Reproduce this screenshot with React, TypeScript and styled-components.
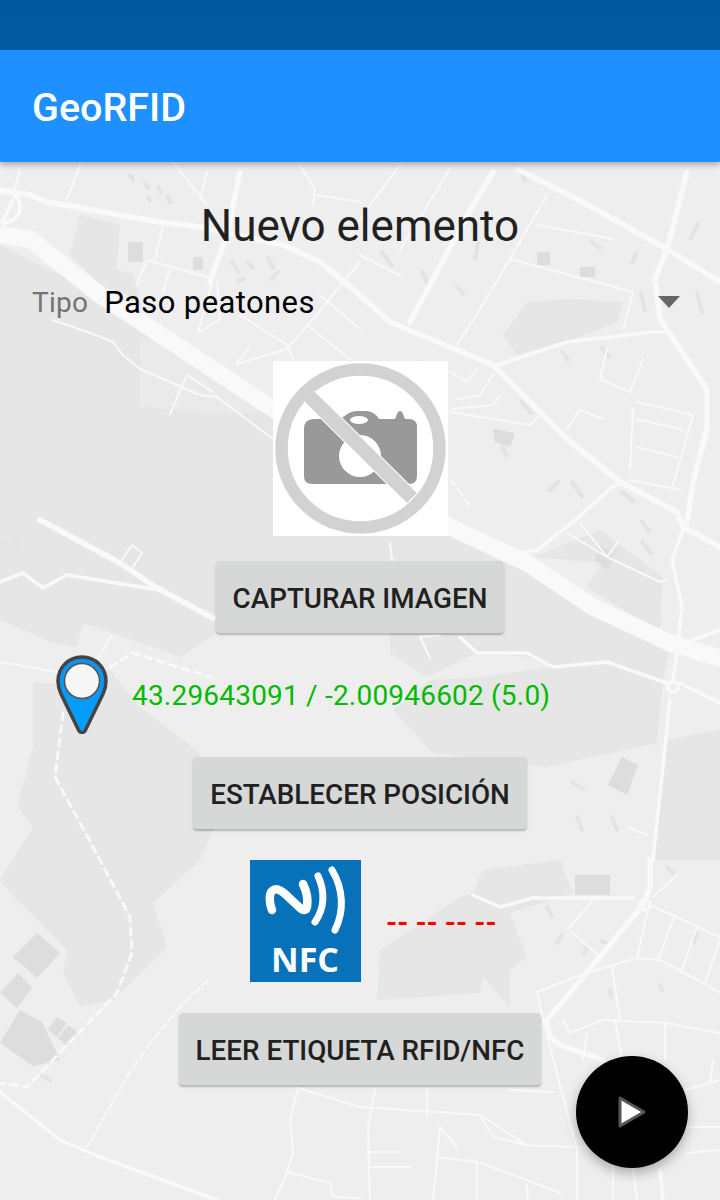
import styled, { createGlobalStyle } from "styled-components";

const GlobalStyle = createGlobalStyle`
  html, body {
    margin: 0;
    padding: 0;
    background: #eeeeee;
    font-family: Roboto, "Liberation Sans", sans-serif;
  }
`;

// map traced from the reference, in page pixels
const darkAreas = [
  "0,245 100,295 167,339 273,409 450,527 530,560 600,610 670,643 663,683 607,662 553,667 527,657 477,653 427,677 390,653 390,633 217,633 180,657 113,633 83,623 77,647 53,643 0,620",
  "33,683 57,683 110,670 140,707 200,753 213,830 200,860 153,903 167,947 113,1000 80,1007 63,973 67,950 20,903 0,880 33,827 17,807 33,747",
  "380,950 460,897 473,893 483,870 560,860 573,893 510,913 527,957 510,970 510,1007 483,977 480,993 377,1000",
  "393,710 430,680 480,677 553,667 610,660 663,683 657,743 547,767 433,753",
  "667,740 720,730 720,860 653,860",
  "533,557 603,563 587,587 660,633 663,577 600,530",
  "503,335 527,302 573,299 623,302 617,322 567,342 517,355",
  "70,255 80,215 120,225 117,269 133,275 140,300 100,285",
];

const paleAreas = ["140,339 233,414 140,407", "140,339 167,339 273,409 233,414"];

const buildings = [
  "622,757 638,765 627,795 608,785",
  "575,875 610,875 610,895 575,895",
  "37,933 60,953 37,978 13,957",
  "18,973 32,988 17,1008 0,993",
  "20,1010 42,1022 60,1060 33,1066 0,1043",
  "57,1017 67,1023 57,1037 48,1030",
  "68,1025 77,1032 65,1045 58,1038",
  "580,267 595,267 595,277 580,277",
  "537,252 550,252 550,265 537,265",
  "493,429 515,433 510,447 495,442",
  "128,242 143,242 143,262 128,262",
  "193,257 203,257 203,270 193,270",
  "600,545 615,555 608,570 595,560",
];

const smallBlocks = [
  "130,175 133,180", "145,183 148,188", "158,187 161,192", "168,197 170,202", "148,197 150,200",
  "232,262 238,272", "247,262 253,268", "268,258 273,268", "238,281 244,279", "272,279 278,272",
  "632,262 636,254", "592,242 600,248", "602,348 609,357", "562,352 568,360", "478,244 475,258",
  "382,252 392,266", "422,272 428,284", "457,287 463,294", "522,402 531,413", "502,447 507,456",
  "572,482 582,496", "622,492 633,501", "642,542 651,553", "618,548 613,555", "558,482 550,490",
  "698,224 691,238", "697,294 702,312", "641,294 645,310", "521,172 525,180", "417,362 426,369",
  "572,782 583,789", "577,817 582,830", "612,817 617,830", "667,867 673,873",
  "547,907 552,916", "557,943 562,935", "588,947 583,954", "602,941 608,945",
  "697,933 694,942", "660,985 662,990", "610,990 611,996", "0,540 8,543", "12,534 18,548",
  "642,522 649,531", "42,1076 50,1080",
];

const majorRoads = [
  "0,235 30,239 100,295 167,339 273,409 450,527 527,563 593,607 670,643 720,658",
];

const mainRoads = [
  "0,190 30,195 47,202 160,222 200,227 283,245 320,262 353,289 390,322 493,365 567,439 620,482 677,512 683,527 720,547",
  "517,169 577,199 667,249 720,282",
  "687,172 667,249 655,279 660,319 680,349 707,389 707,429 693,482 687,522",
  "240,172 227,235 210,282",
  "493,172 473,205 410,322",
  "650,860 650,887 643,905 547,1020 550,1037 560,1045 603,1060",
  "40,520 120,563 157,588 213,618",
];

const roads = [
  "497,365 567,342 653,332 670,332",
  "683,530 672,560 682,607 678,643 673,680",
  "670,700 653,860",
  "680,683 720,703",
  "687,642 720,630",
  "460,637 477,653 527,653 553,667 607,662 667,683",
  "0,1092 60,1140 100,1157 217,1200",
  "473,895 500,907 533,898 633,898",
  "660,1170 663,1200",
  "517,553 537,550 573,522 610,489 623,482",
  "0,582 23,573 43,588 67,575 147,588 160,590",
  "13,199 3,222 7,232 20,235",
];

const minorRoads = [
  "80,165 67,199", "20,169 15,189", "173,162 207,205", "207,172 200,199", "163,225 155,259",
  "147,260 213,279", "147,260 137,285", "170,269 163,292", "213,279 203,315 198,332",
  "217,282 220,319 200,332", "300,165 315,189 313,205", "317,195 360,202", "240,315 287,345 293,359",
  "287,349 313,319 360,262", "237,364 287,349", "248,349 237,364", "320,295 360,329", "307,325 350,359",
  "53,320 93,334 113,342 123,355 140,369 200,395 217,397 273,439", "187,375 170,414", "187,375 213,392",
  "547,195 510,259 480,309 457,345", "510,259 633,292 623,329", "537,225 613,239",
  "360,255 400,275", "637,402 693,415", "637,419 683,430", "637,447 677,457", "630,480 680,490",
  "693,415 673,485", "633,409 630,469", "600,379 630,392 643,359", "600,379 607,349",
  "580,410 603,419", "580,410 567,429", "453,409 493,405 500,395", "450,412 530,425 540,415",
  "477,369 467,382 450,372", "493,375 480,395 457,399", "400,165 370,205 350,235", "450,169 400,250",
  "567,533 607,557 660,582 667,580", "580,523 607,557 618,542", "420,637 430,658", "420,637 440,635",
  "390,543 392,560", "627,827 647,835", "122,560 132,545 142,553 133,567", "0,662 57,672",
  "97,660 112,635", "298,1088 360,1107", "298,1088 290,1120 293,1153 287,1172 275,1200",
  "287,1172 330,1183 333,1197 360,1198", "650,905 720,937", "653,897 677,875", "675,915 658,960",
  "697,927 682,970", "720,940 705,983", "647,913 637,958", "587,973 637,958 660,960 703,983 720,993",
  "587,973 537,992 543,1020 577,1150 577,1200", "612,967 620,1020", "615,1020 622,1060",
  "563,1020 570,1033 603,1020 665,1023 720,1033", "665,1023 665,1060", "587,1033 583,1060",
  "570,930 600,957", "593,900 570,927", "360,1107 480,1115 527,1145 573,1147", "480,1115 493,1137 527,1145",
  "427,1090 427,1117", "375,1090 368,1127 370,1200", "440,1127 433,1200", "440,1127 457,1147",
  "437,1157 477,1162 477,1200", "480,1163 527,1180 560,1193", "370,1152 398,1152", "370,1167 410,1167",
  "510,1090 553,1092", "685,1090 720,1080", "713,1060 710,1083", "687,1127 720,1127",
  "633,1167 637,1200", "613,1167 613,1200", "687,1153 720,1150", "527,1185 528,1200", "577,1147 600,1150",
];

const dashedRoads = [
  "110,667 133,653 210,677",
  "63,713 55,777 100,860 130,917 132,953 117,993 27,1087 0,1083",
];

const faintDashedRoads = ["208,980 180,1007 147,1047 127,1077 87,1147", "450,479 470,505"];

function MapBackdrop() {
  return (
    <MapSvg viewBox="0 0 720 1200" aria-hidden="true">
      <rect width="720" height="1200" fill="#eeeeee" />
      {darkAreas.map((points) => (
        <polygon key={points} points={points} fill="#e6e6e6" />
      ))}
      {paleAreas.map((points) => (
        <polygon key={points} points={points} fill="#eaeaea" />
      ))}
      {buildings.map((points) => (
        <polygon key={points} points={points} fill="#dddddd" />
      ))}
      <g fill="none" strokeLinejoin="round" strokeLinecap="round">
        <g stroke="#e3e3e3" strokeWidth="4">
          {smallBlocks.map((points) => (
            <polyline key={points} points={points} />
          ))}
        </g>
        <g stroke="#f9f9f9">
          {minorRoads.map((points) => (
            <polyline key={points} points={points} strokeWidth="2" />
          ))}
          {roads.map((points) => (
            <polyline key={points} points={points} strokeWidth="3.5" />
          ))}
          {mainRoads.map((points) => (
            <polyline key={points} points={points} strokeWidth="5.5" />
          ))}
          {majorRoads.map((points) => (
            <polyline key={points} points={points} strokeWidth="17" />
          ))}
          {dashedRoads.map((points) => (
            <polyline key={points} points={points} strokeWidth="3" strokeDasharray="7 6" />
          ))}
          {faintDashedRoads.map((points) => (
            <polyline key={points} points={points} strokeWidth="2" strokeDasharray="8 4" />
          ))}
          <circle cx="645" cy="905" r="5" strokeWidth="3.5" />
          <circle cx="673" cy="687" r="5" strokeWidth="3.5" />
          <circle cx="5" cy="207" r="15" strokeWidth="4" />
        </g>
      </g>
    </MapSvg>
  );
}

function NoCameraIcon() {
  return (
    <PhotoBox>
      <svg width="175" height="175" viewBox="0 0 175 175">
        <path
          d="M31 68q0-10 10-10h26l6-4q5-4 12-4h8q8 0 13 8h16l2-5q1-3 3-3t3 3l2 5h4q8 0 8 8v49q0 8-8 8H39q-8 0-8-8z"
          fill="#999999"
        />
        <ellipse cx="86" cy="59" rx="9" ry="4" fill="#ffffff" />
        <circle cx="87" cy="95" r="21" fill="#ffffff" />
        <circle cx="87.5" cy="87.5" r="79" fill="none" stroke="#d2d2d2" strokeWidth="12.5" />
        <path d="M36 35 139 137" stroke="#ffffff" strokeWidth="16" />
        <path d="M36 35 139 137" stroke="#d2d2d2" strokeWidth="14" />
      </svg>
    </PhotoBox>
  );
}

function PinIcon() {
  return (
    <svg width="54" height="80" viewBox="0 0 54 80">
      <defs>
        <linearGradient id="pinFill" x1="0" y1="0" x2="0" y2="1">
          <stop offset="0" stopColor="#1190f0" />
          <stop offset="1" stopColor="#00a2ff" />
        </linearGradient>
      </defs>
      <path
        d="M27 2C13 2 3 13 3 26c0 5 1 9 3 13l18 37c1 2 5 2 6 0l18-37c2-4 3-8 3-13C51 13 41 2 27 2z"
        fill="url(#pinFill)"
        stroke="#444444"
        strokeWidth="3.5"
      />
      <circle cx="27" cy="26" r="17.5" fill="#f7f7f7" stroke="#555555" strokeWidth="1.5" />
    </svg>
  );
}

function NfcLogo() {
  return (
    <svg width="111" height="122" viewBox="0 0 111 122">
      <rect width="111" height="122" fill="#0771ba" />
      <g fill="none" stroke="#ffffff" strokeLinecap="round" strokeLinejoin="round">
        <path d="M22 50C19 42 19 34 22 31c3-3 7-2 12 2l15 14c4 4 7 4 8 0 1-6 0-15-4-23" strokeWidth="8.5" />
        <path d="M68 16c7 15 7 32-3 46" strokeWidth="7" />
        <path d="M82 10c12 20 12 42 3 60" strokeWidth="7" />
      </g>
      <NfcText x="55" y="112" textAnchor="middle">
        NFC
      </NfcText>
    </svg>
  );
}

export default function App() {
  return (
    <>
      <GlobalStyle />
      <Screen>
        <MapBackdrop />
        <StatusBar />
        <AppBar>
          <AppTitle>GeoRFID</AppTitle>
        </AppBar>
        <Content>
          <Heading>Nuevo elemento</Heading>
          <TypeRow>
            <TypeLabel>Tipo</TypeLabel>
            <TypeValue>Paso peatones</TypeValue>
            <DropArrow />
          </TypeRow>
          <NoCameraIcon />
          <ActionButton type="button" $top={25}>
            CAPTURAR IMAGEN
          </ActionButton>
          <PositionRow>
            <PinIcon />
            <Coordinates>43.29643091 / -2.00946602 (5.0)</Coordinates>
          </PositionRow>
          <ActionButton type="button" $top={22}>
            ESTABLECER POSICIÓN
          </ActionButton>
          <TagRow>
            <NfcLogo />
            <TagValue>-- -- -- --</TagValue>
          </TagRow>
          <ActionButton type="button" $top={31}>
            LEER ETIQUETA RFID/NFC
          </ActionButton>
        </Content>
        <PlayFab type="button" aria-label="Continuar">
          <svg width="30" height="34" viewBox="0 0 30 34">
            <path
              d="M3 3v28l24-14z"
              fill="#ffffff"
              stroke="#555555"
              strokeWidth="3"
              strokeLinejoin="round"
            />
          </svg>
        </PlayFab>
      </Screen>
    </>
  );
}

const Screen = styled.div`
  position: relative;
  width: 720px;
  height: 1200px;
  overflow: hidden;
`;

const MapSvg = styled.svg`
  position: absolute;
  inset: 0;
  width: 720px;
  height: 1200px;
`;

const StatusBar = styled.div`
  position: relative;
  height: 50px;
  background: linear-gradient(#01579b, #025ca3);
`;

const AppBar = styled.header`
  position: relative;
  display: flex;
  align-items: center;
  height: 112px;
  padding: 0 32px;
  background: #1e90ff;
  box-shadow: 0 3px 6px rgba(0, 0, 0, 0.28);
`;

const AppTitle = styled.h1`
  margin: 2px 0 0;
  color: #ffffff;
  font-size: 39.5px;
  font-weight: 500;
`;

const Content = styled.main`
  position: relative;
  display: flex;
  flex-direction: column;
  align-items: center;
`;

const Heading = styled.h2`
  margin: 37px 0 0;
  color: #212121;
  font-size: 44px;
  font-weight: 400;
  line-height: 54px;
`;

const TypeRow = styled.div`
  align-self: stretch;
  display: flex;
  align-items: center;
  height: 44px;
  margin-top: 27px;
  padding: 0 40px 0 32px;
`;

const TypeLabel = styled.span`
  color: #737373;
  font-size: 28px;
  letter-spacing: 0.25px;
`;

const TypeValue = styled.span`
  flex: 1;
  margin-left: 16px;
  color: #000000;
  font-size: 31px;
  letter-spacing: 0.4px;
`;

const DropArrow = styled.span`
  width: 0;
  height: 0;
  border-left: 11px solid transparent;
  border-right: 11px solid transparent;
  border-top: 12px solid #666666;
`;

const PhotoBox = styled.div`
  width: 175px;
  height: 175px;
  margin-top: 37px;
  background: #ffffff;

  svg {
    display: block;
    filter: blur(0.6px);
  }
`;

const ActionButton = styled.button<{ $top: number }>`
  height: 72px;
  margin-top: ${({ $top }) => $top}px;
  padding: 2px 17px 0;
  border: 0;
  border-radius: 4px;
  background: #d6d7d7;
  box-shadow: 0 2px 2px rgba(0, 0, 0, 0.24);
  color: #212121;
  font-family: Roboto, "Liberation Sans", sans-serif;
  font-size: 27.8px;
  font-weight: 500;
`;

const PositionRow = styled.div`
  align-self: stretch;
  display: flex;
  align-items: center;
  gap: 23px;
  height: 80px;
  margin-top: 22px;
  padding-left: 55px;

  svg {
    flex: none;
  }
`;

const Coordinates = styled.span`
  color: #00bb00;
  font-size: 28px;
  letter-spacing: 0.2px;
`;

const TagRow = styled.div`
  align-self: stretch;
  display: flex;
  align-items: center;
  gap: 25px;
  height: 122px;
  margin-top: 31px;
  padding-left: 250px;

  svg {
    flex: none;
  }
`;

const TagValue = styled.span`
  padding-top: 2px;
  color: #ff0000;
  font-size: 28.4px;
  font-weight: 700;
`;

const NfcText = styled.text`
  fill: #ffffff;
  font-family: "Open Sans", sans-serif;
  font-size: 34px;
  font-weight: 700;
`;

const PlayFab = styled.button`
  position: absolute;
  top: 1056px;
  left: 576px;
  display: flex;
  align-items: center;
  justify-content: center;
  width: 112px;
  height: 112px;
  padding: 0;
  border: 0;
  border-radius: 50%;
  background: #000000;
  box-shadow: 0 5px 12px rgba(0, 0, 0, 0.28);
`;
